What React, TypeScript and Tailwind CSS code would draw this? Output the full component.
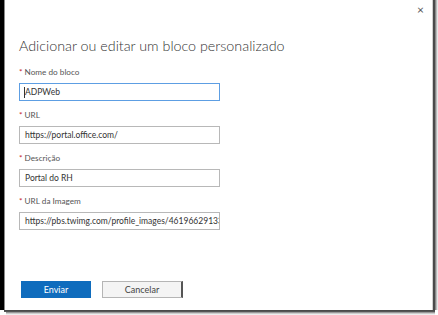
import React from "react";

const font = { fontFamily: 'Lato, "Open Sans", sans-serif' };

function Field({ label, value, focused }: { label: string; value: string; focused?: boolean }) {
  return (
    <div className="flex flex-col">
      <div className="text-[8.2px] leading-[12px] text-[#555] h-[12px]">
        <span className="text-[#c4262e]">*</span> {label}
      </div>
      <div
        className={`mt-[5px] w-[201px] h-[18px] border ${
          focused ? "border-[#5d9ee3]" : "border-[#b8b8b8]"
        } bg-white flex items-center px-[5px] overflow-hidden whitespace-nowrap text-[8.5px] text-[#333]`}
      >
        {focused && <span className="w-px h-[11px] bg-[#333] -ml-[1px]" />}
        {value}
      </div>
    </div>
  );
}

export default function App() {
  return (
    <div className="w-[438px] h-[315px] bg-white flex flex-col overflow-hidden" style={font}>
      <div className="flex h-[310px]">
        <div className="w-[4px] bg-black" />
        <div className="w-[1px] bg-[#8a8a8a]" />
        <div className="flex-1 bg-white flex flex-col pl-[14px] relative">
          <div className="absolute right-[8px] top-[4px] text-[12px] text-[#555] leading-none">×</div>
          <div className="mt-[36px] text-[14.3px] font-light text-[#333] leading-[20px]">
            Adicionar ou editar um bloco personalizado
          </div>
          <div className="mt-[10px] flex flex-col gap-[8px]">
            <Field label="Nome do bloco" value="ADPWeb" focused />
            <Field label="URL" value="https://portal.office.com/" />
            <Field label="Descrição" value="Portal do RH" />
            <Field label="URL da Imagem" value="https://pbs.twimg.com/profile_images/4619662913313-" />
          </div>
          <div className="mt-[51px] flex gap-[11px] pl-[2px]">
            <div className="w-[70px] h-[17px] bg-[#0f6cbd] text-white text-[9px] flex items-center justify-center">
              Enviar
            </div>
            <div className="w-[81px] h-[17px] bg-[#f4f4f4] border border-[#b5b5b5] border-r-[#555] border-r-2 text-[#444] text-[9px] flex items-center justify-center">
              Cancelar
            </div>
          </div>
        </div>
        <div className="w-[1px] bg-[#d0d0d0]" />
        <div className="w-[2px] bg-[#4a4a4a]" />
        <div className="w-[1px] bg-[#888]" />
        <div className="w-[1px] bg-[#bbb]" />
        <div className="w-[1px] bg-[#e6e6e6]" />
      </div>
      <div className="h-[1px] bg-[#4a4a4a] ml-[4px] mr-[3px]" />
      <div className="h-[1px] bg-[#555] ml-[4px] mr-[3px]" />
      <div className="h-[1px] bg-[#999] ml-[6px] mr-[3px]" />
      <div className="h-[1px] bg-[#ccc] ml-[6px] mr-[3px]" />
      <div className="h-[1px] bg-[#eee] ml-[6px] mr-[3px]" />
    </div>
  );
}
